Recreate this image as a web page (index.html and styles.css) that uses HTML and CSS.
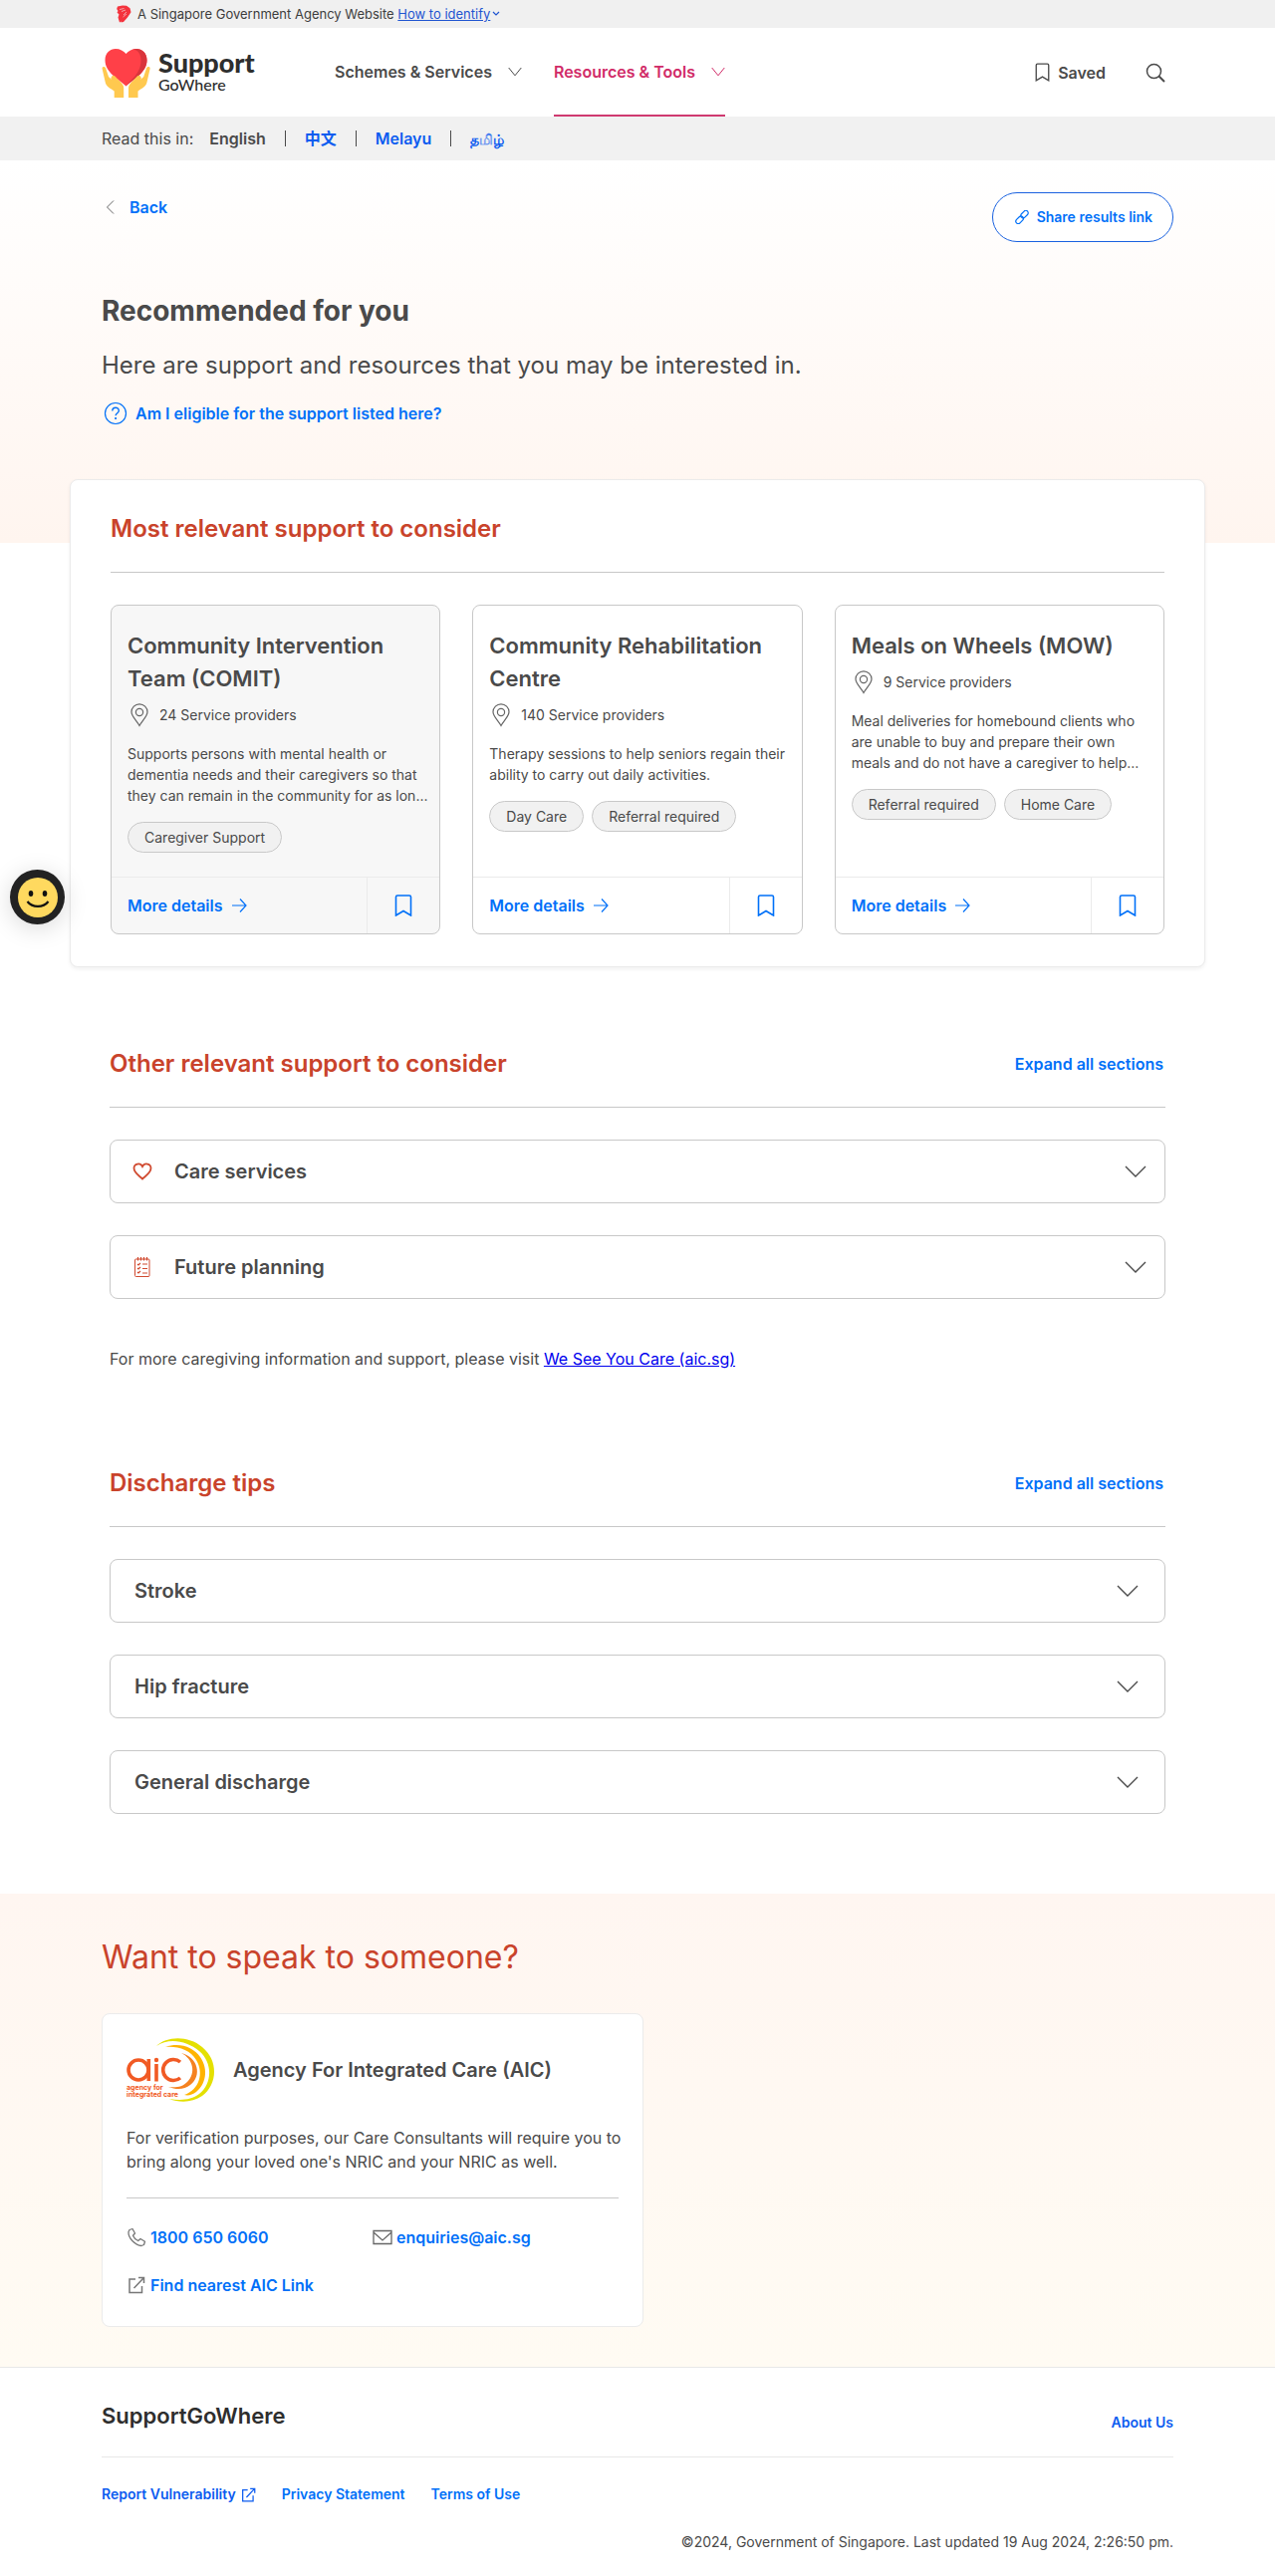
FILE: index.html
```html
<!DOCTYPE html>
<html lang="en">
<head>
<meta charset="utf-8">
<meta name="viewport" content="width=device-width, initial-scale=1">
<title>Recommended for you | SupportGoWhere</title>
<link rel="stylesheet" href="styles.css">
</head>
<body>
<svg class="sprite" aria-hidden="true">
  <symbol id="chevron" viewBox="0 0 22 12"><path d="M1 1l10 10L21 1" fill="none" stroke="currentColor" stroke-width="1.4"/></symbol>
  <symbol id="chevron-s" viewBox="0 0 14 10"><path d="M.7 1L7 8.8 13.3 1" fill="none" stroke="currentColor"/></symbol>
  <symbol id="bookmark" viewBox="0 0 18 22"><path d="M1.5 21V2.5q0-1.5 1.5-1.5h12q1.500 0 1.500 1.500V21L9 16.500z" fill="none" stroke="currentColor" stroke-width="1.600"/></symbol>
  <symbol id="pin" viewBox="0 0 18 24"><path d="M9 22.500C6.500 18 1 13 1 8.800a8 8 0 0 1 16 0C17 13 11.500 18 9 22.500z" fill="none" stroke="currentColor" stroke-width="1.200"/><circle cx="9" cy="9" r="3.600" fill="none" stroke="currentColor" stroke-width="1.200"/></symbol>
  <symbol id="arrow" viewBox="0 0 16 16"><path d="M1 8h14M9 1.500L15 8l-6 6.500" fill="none" stroke="currentColor" stroke-width="1.200"/></symbol>
  <symbol id="external" viewBox="0 0 18 18"><path d="M8 3H2v13.500h12.500V10M6.500 12L16 2M11 1.500h5.500V7" fill="none" stroke="currentColor" stroke-width="1.500"/></symbol>
</svg>

<div class="masthead">
  <div class="container masthead-row">
    <svg width="16" height="18" viewBox="0 0 16 18"><path d="M2 1.500L7 .5l4 .3 3.500 2.500 1 4-2 3-1.500 2.200-4 4.500-2.500.5L6 16.500l-2 1-1.500-5L3.500 9.500 1.500 7.500 2.500 6 1.200 4z" fill="#f4333d"/><path d="M4 4.500l4.500-1M6 6.500l4-1.500M8 10l3-3M7.500 12l3.500-3" stroke="#f0f0f0" stroke-width=".6"/></svg>
    <span>A Singapore Government Agency Website <a href="#identify">How to identify</a></span>
    <svg class="tiny-chevron" width="8" height="6" viewBox="0 0 8 6"><path d="M1 1l3 3 3-3" fill="none" stroke="currentColor" stroke-width="1.200"/></svg>
  </div>
</div>

<header class="header">
  <div class="container header-row">
    <a class="logo" href="#home">
      <svg width="50" height="50" viewBox="0 0 50 50">
        <path d="M24.500 38.500C18 32 3.500 25 3.500 12.500 3.500 5 8.500 1 14 1c4.500 0 8 2 10.500 5C27 3 30.500 1 35 1c5.500 0 10.500 4 10.500 11.500C45.500 25 31 32 24.500 38.500z" fill="#ff4048"/>
        <path d="M35 1c5.500 0 10.500 4 10.500 11.500C45.500 25 31 32 24.500 38.500c3-5 15-12 15-26C39.500 6.500 37 2.500 31.500 1.500Q33.500 1 35 1z" fill="#d9353c"/>
        <path d="M1.500 19Q0 19.500.7 21.500l3 13c1 5 5.500 6 9 9V50h9.500V40c0-3-2.500-5-4.500-7l-4-4.200q-2-2-3.600 0t0 3.200L7 29 4 20Q3 18.500 1.500 19z" fill="#ffc94f"/>
        <path d="M47.700 19q1.500.5.800 2.500l-3 13c-1 5-5.500 6-9 9V50H27V40c0-3 2.500-5 4.500-7l4-4.200q2-2 3.600 0t0 3.200l3.100-3 3-9q1-1.500 2.500-1z" fill="#ffc94f"/>
      </svg>
      <span class="logo-text"><span class="logo-top">Support</span><span class="logo-bottom">GoWhere</span></span>
    </a>
    <nav class="nav">
      <button class="nav-item" type="button">Schemes &amp; Services <svg width="14" height="10"><use href="#chevron-s"/></svg></button>
      <button class="nav-item active" type="button">Resources &amp; Tools <svg width="14" height="10"><use href="#chevron-s"/></svg></button>
    </nav>
    <a class="saved" href="#saved"><svg width="15" height="19"><use href="#bookmark"/></svg>Saved</a>
    <button class="search" type="button" aria-label="Search"><svg width="20" height="20" viewBox="0 0 20 20"><circle cx="8.500" cy="8.500" r="7" fill="none" stroke="currentColor" stroke-width="1.500"/><path d="M13.500 13.500l5.500 5.500" stroke="currentColor" stroke-width="2"/></svg></button>
  </div>
</header>

<div class="langbar">
  <div class="container lang-row">
    <span>Read this in:</span>
    <ul class="langs">
      <li><strong>English</strong></li>
      <li><a href="#zh" lang="zh">中文</a></li>
      <li><a href="#ms" lang="ms">Melayu</a></li>
      <li><a href="#ta" lang="ta">தமிழ்</a></li>
    </ul>
  </div>
</div>

<main class="main">
  <div class="container hero">
    <div class="hero-top">
      <a class="back" href="#back"><svg width="9" height="14" viewBox="0 0 9 14"><path d="M8 .5L1.500 7 8 13.500" fill="none" stroke="#666"/></svg>Back</a>
      <button class="share" type="button"><svg width="14" height="14" viewBox="0 0 14 14" fill="none" stroke="currentColor" stroke-width="1.200"><rect x="5.200" y="1.700" width="8.600" height="4.800" rx="2.400" transform="rotate(-45 9.500 4.100)"/><rect x=".3" y="7.400" width="8.600" height="4.800" rx="2.400" transform="rotate(-45 4.600 9.800)"/></svg>Share results link</button>
    </div>
    <h1>Recommended for you</h1>
    <p class="lead">Here are support and resources that you may be interested in.</p>
    <a class="eligible" href="#eligibility"><svg width="24" height="24" viewBox="0 0 24 24" fill="none" stroke="currentColor"><circle cx="12" cy="12" r="10.500" stroke-width="1.200"/><path d="M8.800 9.500c0-4.300 6.600-4.200 6.500-.2 0 2.400-3.200 2.400-3.200 5" stroke-width="1.400"/><path d="M12.100 16v2" stroke-width="1.700"/></svg>Am I eligible for the support listed here?</a>
  </div>

  <section class="panel">
    <h2>Most relevant support to consider</h2>
    <hr>
    <div class="cards">
      <article class="card hovered">
        <div class="card-body">
          <h3>Community Intervention<br>Team (COMIT)</h3>
          <p class="providers"><svg width="18" height="24"><use href="#pin"/></svg>24 Service providers</p>
          <p class="desc">Supports persons with mental health or<br>dementia needs and their caregivers so that<br>they can remain in the community for as lon...</p>
          <ul class="tags"><li>Caregiver Support</li></ul>
        </div>
        <div class="card-foot"><a href="#comit">More details <svg width="16" height="16"><use href="#arrow"/></svg></a><button type="button" aria-label="Save"><svg width="18" height="22"><use href="#bookmark"/></svg></button></div>
      </article>
      <article class="card">
        <div class="card-body">
          <h3>Community Rehabilitation<br>Centre</h3>
          <p class="providers"><svg width="18" height="24"><use href="#pin"/></svg>140 Service providers</p>
          <p class="desc">Therapy sessions to help seniors regain their<br>ability to carry out daily activities.</p>
          <ul class="tags"><li>Day Care</li><li>Referral required</li></ul>
        </div>
        <div class="card-foot"><a href="#rehab">More details <svg width="16" height="16"><use href="#arrow"/></svg></a><button type="button" aria-label="Save"><svg width="18" height="22"><use href="#bookmark"/></svg></button></div>
      </article>
      <article class="card">
        <div class="card-body">
          <h3>Meals on Wheels (MOW)</h3>
          <p class="providers"><svg width="18" height="24"><use href="#pin"/></svg>9 Service providers</p>
          <p class="desc">Meal deliveries for homebound clients who<br>are unable to buy and prepare their own<br>meals and do not have a caregiver to help...</p>
          <ul class="tags"><li>Referral required</li><li>Home Care</li></ul>
        </div>
        <div class="card-foot"><a href="#mow">More details <svg width="16" height="16"><use href="#arrow"/></svg></a><button type="button" aria-label="Save"><svg width="18" height="22"><use href="#bookmark"/></svg></button></div>
      </article>
    </div>
  </section>

  <section class="container section other">
    <div class="section-head"><h2>Other relevant support to consider</h2><button class="expand" type="button">Expand all sections</button></div>
    <hr>
    <div class="accordions">
      <button class="accordion with-icon" type="button"><svg class="lead-icon" width="20" height="20" viewBox="0 0 20 20"><path d="M10 17.500C7 14.500 1.500 11.500 1.500 6.800c0-5 6.500-5.800 8.500-1.800 2-4 8.500-3.200 8.500 1.800C18.500 11.500 13 14.500 10 17.500z" fill="none" stroke="currentColor" stroke-width="1.800"/></svg><span>Care services</span><svg width="22" height="12"><use href="#chevron"/></svg></button>
      <button class="accordion with-icon" type="button"><svg class="lead-icon" width="20" height="20" viewBox="0 0 20 20" fill="none" stroke="currentColor"><rect x="2.500" y="2" width="14.500" height="17.500" rx="1"/><path d="M5.500 0v3.500M8.500 0v3.500M11.500 0v3.500M14.500 0v3.500M5 7l1 1 2-2M5 11l1 1 2-2M5 15l1 1 2-2M10 7h5M10 11.500h5M10 16h5" stroke-width="1.200"/></svg><span>Future planning</span><svg width="22" height="12"><use href="#chevron"/></svg></button>
    </div>
    <p class="more-info">For more caregiving information and support, please visit <a href="#aic">We See You Care (aic.sg)</a></p>
  </section>

  <section class="container section discharge">
    <div class="section-head"><h2>Discharge tips</h2><button class="expand" type="button">Expand all sections</button></div>
    <hr>
    <div class="accordions">
      <button class="accordion" type="button"><span>Stroke</span><svg width="22" height="12"><use href="#chevron"/></svg></button>
      <button class="accordion" type="button"><span>Hip fracture</span><svg width="22" height="12"><use href="#chevron"/></svg></button>
      <button class="accordion" type="button"><span>General discharge</span><svg width="22" height="12"><use href="#chevron"/></svg></button>
    </div>
  </section>

  <section class="contact">
    <div class="container">
      <h2>Want to speak to someone?</h2>
      <div class="contact-card">
        <div class="agency">
          <svg width="90" height="64" viewBox="0 0 90 64" role="img" aria-label="AIC">
            <path d="M30 8C40-2 62-3 76 9c17 14 15 38 0 49-10 7-23 7-33 3 12 2 22 1 30-5 13-10 14-31 0-43C61 3 43-1 30 8z" fill="#e4e000"/>
            <path d="M39 9c14-5 28 0 35 10 9 13 5 28-4 35-4 3-8 4-12 3 15-5 20-22 12-35C64 12 52 8 39 9z" fill="#ffb400"/>
            <path d="M55 15c17 4 21 23 9 32-6 5-14 5-22 2 8 1 14 0 19-5 9-9 6-23-6-29z" fill="#f58220"/>
            <g fill="none" stroke="#f15a24" stroke-width="3.600"><ellipse cx="12" cy="32" rx="10" ry="10"/><path d="M22.300 21v22M30 26v17.500M54 24a10.500 10.500 0 1 0 0 16"/></g>
            <circle cx="30" cy="22" r="2.200" fill="#f15a24"/>
            <text class="aic-text" x="0" y="52">agency for</text><text class="aic-text" x="0" y="59">integrated care</text>
          </svg>
          <h3>Agency For Integrated Care (AIC)</h3>
        </div>
        <p>For verification purposes, our Care Consultants will require you to<br>bring along your loved one's NRIC and your NRIC as well.</p>
        <hr>
        <div class="contact-links">
          <a href="#phone"><svg width="20" height="20" viewBox="0 0 20 20"><path d="M3 2.500l3-1 2.500 4.500-2 2.200c1 2.500 2.800 4.200 5.200 5.300l2.300-2 4.500 2.700-1 3.300-2.500 1C9 18 1.500 11 2 4.500z" fill="none" stroke="#777" stroke-width="1.300" stroke-linejoin="round"/></svg>1800 650 6060</a>
          <a href="#email"><svg width="20" height="20" viewBox="0 0 20 20"><path d="M1 3.500h18v13H1zM1 5l9 8 9-8" fill="none" stroke="#666" stroke-width="1.300"/></svg>enquiries@aic.sg</a>
          <a href="#link"><svg class="grey" width="20" height="20" viewBox="-1 -1 20 20"><use href="#external" width="18" height="18"/></svg>Find nearest AIC Link</a>
        </div>
      </div>
    </div>
  </section>
</main>

<footer class="footer">
  <div class="container">
    <div class="footer-top"><h2>SupportGoWhere</h2><a class="deep" href="#about">About Us</a></div>
    <hr>
    <div class="footer-links"><a class="deep" href="#report">Report Vulnerability <svg width="15" height="15"><use href="#external"/></svg></a><a href="#privacy">Privacy Statement</a><a href="#terms">Terms of Use</a></div>
    <p class="copyright">©2024, Government of Singapore. Last updated 19 Aug 2024, 2:26:50 pm.</p>
  </div>
</footer>

<button class="feedback" type="button" aria-label="Feedback"><svg width="40" height="40" viewBox="0 0 40 40"><circle cx="20" cy="20" r="20" fill="#ffd95f"/><ellipse cx="13" cy="16" rx="2.300" ry="3" fill="#111"/><ellipse cx="27" cy="16" rx="2.300" ry="3" fill="#111"/><path d="M9.500 24c5 6.500 16 6.500 21 0" fill="none" stroke="#111" stroke-width="2.200"/></svg></button>
</body>
</html>
```
FILE: styles.css
```css
* { box-sizing: border-box; }

body {
  margin: 0;
  background: #fff;
  color: #4a4a4a;
  font-family: Inter, "Liberation Sans", "Noto Sans CJK SC", sans-serif;
  font-size: 16px;
  line-height: 24px;
}

h1, h2, h3, p, ul { margin: 0; padding: 0; font-weight: 600; }
p, ul { font-weight: 400; }
ul { list-style: none; }
a { color: #0070f8; font-weight: 600; text-decoration: none; }
button { border: 0; padding: 0; background: none; color: inherit; font: inherit; cursor: pointer; }
svg { display: block; flex: none; }
hr { height: 1px; margin: 0; border: 0; background: #c8c8c8; }
.sprite { position: absolute; width: 0; height: 0; }

.container {
  width: calc(100% - 48px);
  max-width: 1076px;
  margin: 0 auto;
}

/* Government masthead */
.masthead { background: #f0f0f0; }
.masthead-row { display: flex; align-items: center; height: 28px; padding-left: 14px; gap: 6px; font-size: 13px; color: #3d3d3d; }
.masthead a { color: #1f55d0; font-weight: 400; text-decoration: underline; }
.tiny-chevron { margin-left: -4px; color: #1f55d0; }

/* Header */
.header-row { display: flex; align-items: center; height: 89px; }
.logo { display: flex; gap: 7px; width: 234px; }
.logo-text { display: flex; flex-direction: column; padding-top: 2px; color: #2e2e2e; font-family: Lato, sans-serif; }
.logo-top { font-size: 27px; font-weight: 900; line-height: 26px; }
.logo-bottom { font-size: 16px; font-weight: 500; line-height: 18px; }
.nav { display: flex; gap: 32px; align-self: stretch; flex: 1; }
.nav-item { display: flex; align-items: center; gap: 16px; border-bottom: 2px solid transparent; font-weight: 600; }
.nav-item.active { border-color: #cf3a70; color: #d12c68; }
.saved { display: flex; align-items: center; gap: 8px; color: #4a4a4a; }
.search { margin: 0 8px 0 40px; }

/* Language bar */
.langbar { background: #f1f1f1; }
.lang-row { display: flex; gap: 16px; height: 44px; align-items: center; }
.langs { display: flex; }
.langs li + li::before { content: ""; display: inline-block; width: 1px; height: 16px; margin: 0 19px; background: #4a4a4a; vertical-align: -2px; }
.langs strong { font-weight: 600; }
.langs a { color: #0c5cf0; }
.langs [lang="ta"] { font-size: 14px; font-weight: 700; }

/* Hero */
.main { background: linear-gradient(#fff, #fff5ef) no-repeat 0 0 / 100% 384px; }
.hero { padding-top: 32px; }
.hero-top { display: flex; justify-content: space-between; align-items: flex-start; }
.back { display: flex; align-items: center; gap: 15px; padding-left: 4px; line-height: 30px; }
.share { display: flex; align-items: center; gap: 8px; height: 50px; padding: 0 20px 0 22px; border: 1px solid #1a62e0; border-radius: 25px; background: #fff; color: #0070f8; font-size: 14px; font-weight: 600; }
h1 { margin-top: 51px; font-size: 28px; font-weight: 700; line-height: 36px; }
.lead { margin-top: 19px; font-size: 24px; line-height: 36px; }
.eligible { display: flex; gap: 8px; width: fit-content; margin-top: 18px; padding-left: 2px; }

/* Most relevant panel */
.panel {
  width: calc(100% - 16px);
  max-width: 1140px;
  margin: 54px auto 0;
  padding: 33px 40px 32px;
  border: 1px solid #ebebeb;
  border-radius: 8px;
  background: #fff;
  box-shadow: 0 2px 4px rgba(0, 0, 0, .06);
}
.panel h2, .section h2 { color: #c9432b; font-size: 24px; line-height: 32px; }
.panel h2 { margin-bottom: 27px; }
.cards { display: grid; grid-template-columns: repeat(3, 1fr); gap: 32px; margin-top: 32px; }
.card { display: flex; flex-direction: column; overflow: hidden; border: 1px solid #c8c8c8; border-radius: 8px; background: #fff; }
.card.hovered { background: #f7f7f7; }
.card-body { flex: 1; padding: 24px 8px 24px 16px; }
.card h3 { font-size: 22px; line-height: 33px; }
.providers { display: flex; align-items: center; gap: 11px; margin-top: 8px; padding-left: 3px; font-size: 14px; }
.providers svg { color: #666; }
.desc { margin-top: 16px; font-size: 14px; line-height: 21px; }
.tags { display: flex; flex-wrap: wrap; gap: 8px; margin-top: 16px; }
.tags li { padding: 0 16px; border: 1px solid #c8c8c8; border-radius: 16px; background: #f1f1f1; font-size: 14px; line-height: 29px; }
.card-foot { display: flex; height: 57px; border-top: 1px solid #ebebeb; color: #0070f8; }
.card-foot a { display: flex; flex: 1; align-items: center; gap: 8px; padding-left: 16px; }
.card-foot button { display: grid; place-items: center; width: 73px; border-left: 1px solid #ebebeb; }

/* Accordion sections */
.section { padding: 81px 8px 0; }
.section.discharge { padding: 97px 8px 80px; }
.section-head { display: flex; justify-content: space-between; align-items: center; margin-bottom: 27px; }
.expand { padding-right: 2px; color: #0070f8; font-weight: 600; }
.accordions { display: grid; gap: 32px; margin-top: 32px; }
.accordion { display: flex; align-items: center; height: 64px; padding: 0 26px 0 24px; border: 1px solid #c8c8c8; border-radius: 8px; background: #fff; font-size: 20px; font-weight: 600; text-align: left; }
.accordion.with-icon { padding: 0 18px 0 22px; }
.accordion span { flex: 1; }
.lead-icon { margin-right: 22px; color: #d04a30; }
.more-info { margin-top: 48px; }
.more-info a { color: #00e; font-weight: 400; text-decoration: underline; }

/* Contact */
.contact { padding: 44px 0 40px; background: linear-gradient(#fff6f1, #fffbf3); }
.contact h2 { color: #c9432b; font-size: 32px; font-weight: 400; line-height: 40px; }
.contact-card { max-width: 544px; margin-top: 36px; padding: 24px 16px 29px 24px; border: 1px solid #ebebeb; border-radius: 8px; background: #fff; }
.agency { display: flex; align-items: center; gap: 17px; margin-bottom: 24px; }
.agency h3 { font-size: 20px; }
.aic-text { fill: #f15a24; font-size: 7px; font-weight: 700; }
.contact-card hr { margin: 24px 8px 27px 0; }
.contact-links { display: grid; grid-template-columns: 1fr 1fr; gap: 24px 0; margin-right: 8px; }
.contact-links a { display: flex; align-items: center; gap: 4px; }
.grey { color: #777; }

/* Footer */
.footer { padding: 32px 0 22px; border-top: 1px solid #e8e8e8; }
.footer hr { margin: 22px 0 25px; background: #e8e8e8; }
.footer-top { display: flex; justify-content: space-between; align-items: flex-end; min-height: 35px; font-size: 14px; }
.footer h2 { align-self: flex-start; color: #2e2e2e; font-size: 22px; line-height: 32px; }
.footer-links { display: flex; gap: 26px; font-size: 14px; }
.footer-links a { display: flex; align-items: center; gap: 5px; }
.footer .deep { color: #0c5cf0; }
.copyright { margin-top: 24px; font-size: 14px; text-align: right; }

/* Floating feedback button */
.feedback { position: fixed; left: 10px; top: 873px; display: grid; place-items: center; width: 55px; height: 55px; border-radius: 50%; background: #222; box-shadow: 0 4px 24px rgba(0, 0, 0, .15); }
```
